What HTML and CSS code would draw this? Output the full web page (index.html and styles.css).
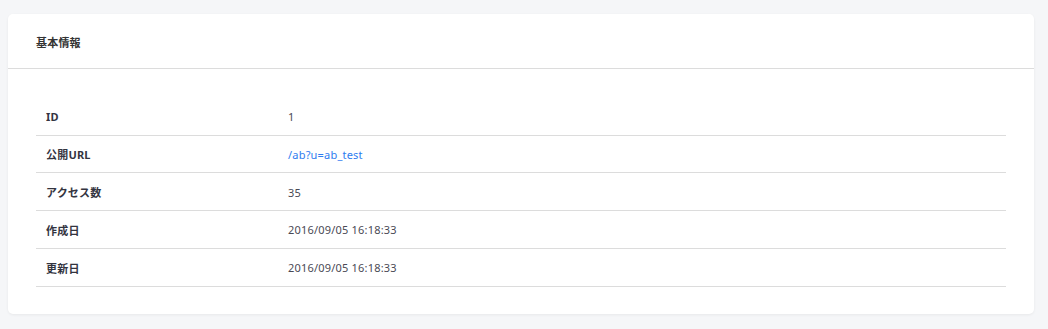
FILE: index.html
```html
<!DOCTYPE html>
<html lang="ja">
<head>
<meta charset="utf-8">
<link rel="stylesheet" href="styles.css">
</head>
<body>
<div class="card">
  <div class="card-header">基本情報</div>
  <div class="card-body">
    <table class="info">
      <tr><th>ID</th><td>1</td></tr>
      <tr><th>公開URL</th><td><a href="#">/ab?u=ab_test</a></td></tr>
      <tr><th>アクセス数</th><td>35</td></tr>
      <tr><th>作成日</th><td>2016/09/05 16:18:33</td></tr>
      <tr><th>更新日</th><td>2016/09/05 16:18:33</td></tr>
    </table>
  </div>
</div>
</body>
</html>
```

FILE: styles.css
```css
html, body {
  margin: 0;
  padding: 0;
  background: #f5f6f8;
}
body {
  padding: 14px 14px 15px 8px;
  font-family: "Noto Sans", "Noto Sans CJK JP", sans-serif;
  font-size: 11px;
  letter-spacing: 0.2px;
  color: #4a4a55;
}
.card {
  background: #fff;
  border-radius: 5px;
  box-shadow: 0 1px 3px rgba(0,0,0,0.06);
  height: 300px;
  box-sizing: border-box;
}
.card-header {
  height: 55px;
  box-sizing: border-box;
  border-bottom: 1px solid #dcdcdc;
  padding: 2px 28px 0;
  display: flex;
  align-items: center;
  font-weight: 700;
  color: #333;
}
.card-body {
  padding: 29px 28px 28px;
}
.info {
  width: 100%;
  border-collapse: collapse;
}
.info tr {
  height: 37.75px;
  border-bottom: 1px solid #dcdcdc;
}
.info tr:first-child {
  height: 37px;
}
.info th {
  width: 252px;
  text-align: left;
  font-weight: 700;
  color: #33343f;
  padding: 1px 0 0 10px;
  box-sizing: border-box;
}
.info td {
  padding: 1px 0 0 0;
  color: #4a4a55;
}
.info a {
  color: #2e7cf0;
  text-decoration: none;
}
```
